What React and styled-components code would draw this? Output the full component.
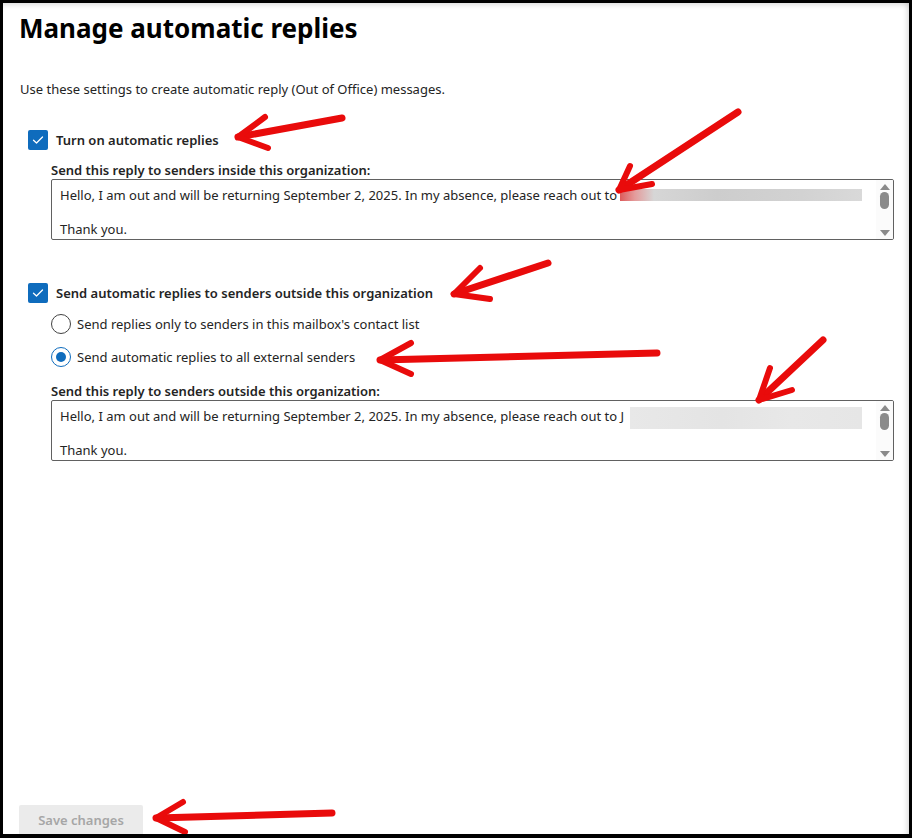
import React from 'react';
import styled, { createGlobalStyle } from 'styled-components';

const GlobalStyle = createGlobalStyle`
  body {
    margin: 0;
    font-family: "Noto Sans", "Open Sans", sans-serif;
    color: #242424;
    background: #fff;
  }
`;

const Frame = styled.div`
  position: relative;
  width: 912px;
  height: 838px;
  box-sizing: border-box;
  border: 3px solid #000;
  border-bottom-width: 4px;
  overflow: hidden;
  display: flex;
  flex-direction: column;
  padding: 7px 15px 0 17px;
  box-shadow: inset 0 6px 6px -5px rgba(0, 0, 0, 0.18), inset -6px 0 6px -5px rgba(0, 0, 0, 0.18);
`;

const Title = styled.h1`
  margin: 0 0 0 -1px;
  font-size: 26px;
  line-height: 36px;
  font-weight: 700;
  color: #000;
`;

const Description = styled.p`
  margin: 34px 0 0;
  font-size: 13px;
  line-height: 18px;
`;

const CheckRow = styled.label`
  display: flex;
  align-items: center;
  gap: 8px;
  margin: ${(p) => p.$top}px 0 0 8px;
  font-size: 13px;
  font-weight: 600;
  line-height: 20px;
`;

const CheckBox = styled.span`
  width: 20px;
  height: 20px;
  border-radius: 2px;
  background: #0f6cbd;
  display: flex;
  align-items: center;
  justify-content: center;
  flex-shrink: 0;
`;

const Indented = styled.div`
  margin-left: 31px;
  display: flex;
  flex-direction: column;
`;

const RadioRow = styled.label`
  display: flex;
  align-items: center;
  gap: 6px;
  margin-top: ${(p) => p.$top}px;
  font-size: 13px;
  line-height: 20px;
`;

const RadioCircle = styled.span`
  width: 20px;
  height: 20px;
  box-sizing: border-box;
  border-radius: 50%;
  border: 1px solid ${(p) => (p.$checked ? '#0f6cbd' : '#424242')};
  display: flex;
  align-items: center;
  justify-content: center;
  flex-shrink: 0;

  &::after {
    content: '';
    width: 10px;
    height: 10px;
    border-radius: 50%;
    background: ${(p) => (p.$checked ? '#0f6cbd' : 'transparent')};
  }
`;

const FieldLabel = styled.div`
  margin-top: ${(p) => p.$top}px;
  font-size: 13px;
  font-weight: 600;
  line-height: 18px;
`;

const TextBox = styled.div`
  position: relative;
  height: 61px;
  box-sizing: border-box;
  border: 1px solid #616161;
  border-radius: 2px;
  padding: 7px 30px 0 8px;
  font-size: 13px;
  line-height: 17px;
  overflow: hidden;
`;

const Line = styled.div`
  white-space: nowrap;
  min-height: 17px;
`;

const Redact = styled.span`
  position: absolute;
  left: ${(p) => p.$left}px;
  top: ${(p) => p.$top}px;
  width: ${(p) => p.$width}px;
  height: ${(p) => p.$height}px;
  background: ${(p) => p.$bg};
`;

const ScrollTrack = styled.div`
  position: absolute;
  top: 0;
  right: 0;
  bottom: 0;
  width: 17px;
  background: #fbfbfb;
  display: flex;
  flex-direction: column;
  align-items: center;
  justify-content: space-between;
  padding: 4px 0 3px;
  box-sizing: border-box;
`;

const Arrow = styled.span`
  width: 0;
  height: 0;
  border-left: 5px solid transparent;
  border-right: 5px solid transparent;
  ${(p) => (p.$down ? 'border-top: 6px solid #8a8a8a;' : 'border-bottom: 6px solid #8a8a8a;')}
`;

const Thumb = styled.span`
  width: 9px;
  height: 17px;
  border-radius: 5px;
  background: #8a8a8a;
  margin-top: 2px;
  margin-bottom: auto;
`;

const Footer = styled.div`
  margin-top: auto;
  margin-bottom: -2px;
`;

const SaveButton = styled.button`
  margin-left: -1px;
  width: 124px;
  height: 31px;
  border: none;
  border-radius: 2px;
  background: #ebebeb;
  color: #a6a6a6;
  font-family: inherit;
  font-size: 13px;
  font-weight: 600;
  padding: 0 0 2px;
`;

const Annotations = styled.svg`
  position: absolute;
  left: -3px;
  top: -3px;
  width: 912px;
  height: 838px;
  pointer-events: none;
`;

function Check() {
  return (
    <svg width="12" height="10" viewBox="0 0 12 10">
      <path d="M1.5 5.2 L4.5 8 L10.5 2" fill="none" stroke="#fff" strokeWidth="1.3" strokeLinecap="round" strokeLinejoin="round" />
    </svg>
  );
}

function Scroll() {
  return (
    <ScrollTrack>
      <Arrow />
      <Thumb />
      <Arrow $down />
    </ScrollTrack>
  );
}

const arrows = [
  { tail: [342, 118], tip: [238, 137], a: [265, 117], b: [268, 148] },
  { tail: [738, 112], tip: [619, 190], a: [630, 166], b: [652, 184] },
  { tail: [548, 263], tip: [454, 294], a: [480, 268], b: [490, 299] },
  { tail: [657, 353], tip: [380, 360], a: [411, 343], b: [411, 374] },
  { tail: [823, 340], tip: [759, 400], a: [770, 368], b: [792, 390] },
  { tail: [332, 813], tip: [156, 818], a: [183, 802], b: [185, 832] },
];

function RedArrows() {
  return (
    <Annotations viewBox="0 0 912 838">
      {arrows.map((r, i) => (
        <g key={i} fill="none" stroke="#e90b0b" strokeLinecap="round" strokeLinejoin="round">
          <path d={`M${r.tail[0]} ${r.tail[1]} L${r.tip[0]} ${r.tip[1]}`} strokeWidth="7" />
          <path d={`M${r.a[0]} ${r.a[1]} L${r.tip[0]} ${r.tip[1]} L${r.b[0]} ${r.b[1]}`} strokeWidth="6" />
        </g>
      ))}
    </Annotations>
  );
}

export default function App() {
  return (
    <>
      <GlobalStyle />
      <Frame>
        <Title>Manage automatic replies</Title>
        <Description>Use these settings to create automatic reply (Out of Office) messages.</Description>

        <CheckRow $top={32}>
          <CheckBox><Check /></CheckBox>
          Turn on automatic replies
        </CheckRow>
        <Indented>
          <FieldLabel $top={11}>Send this reply to senders inside this organization:</FieldLabel>
          <TextBox>
            <Line>Hello, I am out and will be returning September 2, 2025. In my absence, please reach out to</Line>
            <Line />
            <Line>Thank you.</Line>
            <Redact
              $left={568}
              $top={9}
              $width={242}
              $height={12}
              $bg="linear-gradient(to right, #dd5a5a 0%, #e49a9a 6%, #d6d6d6 14%, #cdcdcd 40%, #d2d2d2 75%, #d9d9d9 100%)"
            />
            <Scroll />
          </TextBox>
        </Indented>

        <CheckRow $top={43}>
          <CheckBox><Check /></CheckBox>
          Send automatic replies to senders outside this organization
        </CheckRow>
        <Indented>
          <RadioRow $top={11}>
            <RadioCircle />
            Send replies only to senders in this mailbox's contact list
          </RadioRow>
          <RadioRow $top={13}>
            <RadioCircle $checked />
            Send automatic replies to all external senders
          </RadioRow>
          <FieldLabel $top={15}>Send this reply to senders outside this organization:</FieldLabel>
          <TextBox>
            <Line>Hello, I am out and will be returning September 2, 2025. In my absence, please reach out to J</Line>
            <Line />
            <Line>Thank you.</Line>
            <Redact
              $left={578}
              $top={6}
              $width={232}
              $height={22}
              $bg="linear-gradient(to right, #e8e8e8 0%, #e4e4e4 40%, #e8e8e8 70%, #e6e6e6 100%)"
            />
            <Scroll />
          </TextBox>
        </Indented>

        <Footer>
          <SaveButton disabled>Save changes</SaveButton>
        </Footer>
        <RedArrows />
      </Frame>
    </>
  );
}
